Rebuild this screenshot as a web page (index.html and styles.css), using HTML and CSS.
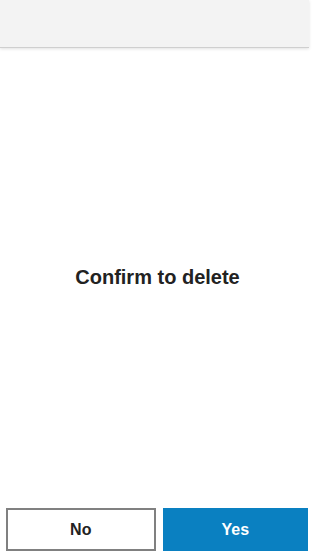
FILE: index.html
```html
<!DOCTYPE html>
<html>
<head>
<meta charset="utf-8">
<link rel="stylesheet" href="styles.css">
</head>
<body>
<div class="app">
  <header class="topbar"></header>
  <main class="content">
    <h1 class="message">Confirm to delete</h1>
  </main>
  <footer class="actions">
    <button class="btn btn-no">No</button>
    <button class="btn btn-yes">Yes</button>
  </footer>
</div>
</body>
</html>
```
FILE: styles.css
```css
* { box-sizing: border-box; }
html, body { margin: 0; padding: 0; height: 100%; background: #fff; }
body { font-family: "Liberation Sans", Arial, sans-serif; color: #222; }
.app { display: flex; flex-direction: column; width: 309px; height: 551px; }
.topbar {
  height: 48px;
  flex: none;
  background: #f3f3f3;
  border-bottom: 1px solid #cfcfcf;
  box-shadow: 0 1px 3px rgba(0,0,0,0.12);
}
.content {
  flex: 1;
  display: flex;
  align-items: center;
  justify-content: center;
  padding-left: 6px;
}
.message {
  margin: 0;
  font-size: 20px;
  font-weight: bold;
  color: #222;
  padding-bottom: 1px;
}
.actions {
  flex: none;
  display: flex;
  gap: 7px;
  padding: 0 1px 0 6px;
  height: 43px;
}
.btn {
  flex: 1;
  height: 43px;
  font-family: "Liberation Sans", Arial, sans-serif;
  font-size: 16px;
  font-weight: bold;
  border-radius: 0;
  margin: 0;
}
.btn-no {
  background: #fff;
  color: #222;
  border: 2px solid #808080;
}
.btn-yes {
  background: #0a80c1;
  color: #fff;
  border: none;
}
```
